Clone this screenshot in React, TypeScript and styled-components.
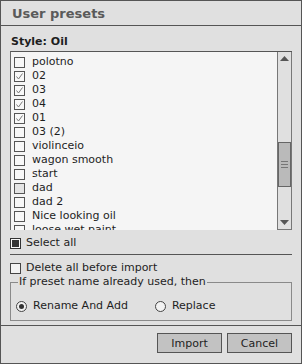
import styled, { createGlobalStyle } from "styled-components";

const GlobalStyle = createGlobalStyle`
  html, body {
    margin: 0;
    padding: 0;
    background: #e0e0e0;
  }
  * {
    box-sizing: border-box;
  }
`;

interface Preset {
  name: string;
  checked: boolean;
  hover?: boolean;
}

const presets: Preset[] = [
  { name: "polotno", checked: false },
  { name: "02", checked: true },
  { name: "03", checked: true },
  { name: "04", checked: true },
  { name: "01", checked: true },
  { name: "03 (2)", checked: false },
  { name: "violinceio", checked: false },
  { name: "wagon smooth", checked: false },
  { name: "start", checked: false },
  { name: "dad", checked: false, hover: true },
  { name: "dad 2", checked: false },
  { name: "Nice looking oil", checked: false },
  { name: "loose wet paint", checked: false },
];

function CheckMark() {
  return (
    <svg width="9" height="9" viewBox="0 0 9 9">
      <polyline points="1.5,4.5 3.5,7 7.5,1.5" fill="none" stroke="#7a7a7a" strokeWidth="1" />
    </svg>
  );
}

function Arrow({ down }: { down?: boolean }) {
  return (
    <svg width="9" height="5" viewBox="0 0 9 5">
      <polygon points={down ? "0,0 9,0 4.5,5" : "0,5 9,5 4.5,0"} fill="#555" />
    </svg>
  );
}

export default function App() {
  return (
    <>
      <GlobalStyle />
      <Dialog>
        <TitleBar>User presets</TitleBar>
        <Body>
          <StyleLabel>Style: Oil</StyleLabel>
          <ListBox>
            <Rows>
              {presets.map((p) => (
                <Row key={p.name}>
                  <Box hover={p.hover}>{p.checked && <CheckMark />}</Box>
                  <span>{p.name}</span>
                </Row>
              ))}
            </Rows>
            <ScrollBar>
              <ArrowCell>
                <Arrow />
              </ArrowCell>
              <Track>
                <Thumb>
                  <Grip />
                  <Grip />
                  <Grip />
                </Thumb>
              </Track>
              <ArrowCell>
                <Arrow down />
              </ArrowCell>
            </ScrollBar>
          </ListBox>
          <OptionRow top={6}>
            <TriBox>
              <TriFill />
            </TriBox>
            <span>Select all</span>
          </OptionRow>
          <Divider />
          <OptionRow top={6}>
            <PlainBox />
            <span>Delete all before import</span>
          </OptionRow>
          <Group>
            <Legend>If preset name already used, then</Legend>
            <RadioLine>
              <RadioItem>
                <Radio>
                  <RadioDot />
                </Radio>
                <span>Rename And Add</span>
              </RadioItem>
              <RadioItem>
                <Radio />
                <span>Replace</span>
              </RadioItem>
            </RadioLine>
          </Group>
        </Body>
        <Footer>
          <Button>Import</Button>
          <Button>Cancel</Button>
        </Footer>
      </Dialog>
    </>
  );
}

const Dialog = styled.div`
  width: 302px;
  height: 364px;
  border: 1px solid #555;
  background: #e0e0e0;
  display: flex;
  flex-direction: column;
  font-family: "DejaVu Sans", sans-serif;
  font-size: 11px;
  color: #1e1e1e;
`;

const TitleBar = styled.div`
  height: 25px;
  flex: none;
  border-bottom: 1px solid #555;
  padding: 5px 0 0 11px;
  font-weight: bold;
  font-size: 13px;
  color: #5a5a5a;
`;

const Body = styled.div`
  flex: 1;
  padding: 9px 9px 0 9px;
  display: flex;
  flex-direction: column;
`;

const StyleLabel = styled.div`
  height: 14px;
  line-height: 14px;
  font-weight: bold;
  margin: 0 0 2px 1px;
`;

const ListBox = styled.div`
  height: 179px;
  flex: none;
  display: flex;
  background: #f5f5f5;
  border-top: 1px solid #555;
  border-left: 1px solid #6a6a6a;
  overflow: hidden;
`;

const Rows = styled.div`
  flex: 1;
  padding: 3px 0 0 3px;
  overflow: hidden;
`;

const Row = styled.div`
  height: 14px;
  display: flex;
  align-items: center;
  gap: 7px;
  line-height: 14px;
  white-space: nowrap;
`;

const Box = styled.div<{ hover?: boolean }>`
  width: 11px;
  height: 11px;
  flex: none;
  border: 1px solid #555;
  background: ${(p) => (p.hover ? "#e4e4e4" : "#f8f8f8")};
  display: flex;
  align-items: center;
  justify-content: center;
`;

const ScrollBar = styled.div`
  width: 15px;
  flex: none;
  display: flex;
  flex-direction: column;
  border: 1px solid #777;
  border-top: none;
  background: #e0e0e0;
`;

const ArrowCell = styled.div`
  height: 13px;
  display: flex;
  align-items: center;
  justify-content: center;
`;

const Track = styled.div`
  flex: 1;
  padding-top: 77px;
`;

const Thumb = styled.div`
  height: 45px;
  background: #bababa;
  border: 1px solid #666;
  display: flex;
  flex-direction: column;
  align-items: center;
  justify-content: center;
  gap: 2px;
`;

const Grip = styled.div`
  width: 7px;
  height: 1px;
  background: #777;
`;

const OptionRow = styled.div<{ top: number }>`
  margin-top: ${(p) => p.top}px;
  height: 14px;
  flex: none;
  display: flex;
  align-items: center;
  gap: 5px;
  line-height: 14px;
`;

const TriBox = styled.div`
  width: 11px;
  height: 11px;
  border: 1px solid #333;
  background: #f8f8f8;
  display: flex;
  align-items: center;
  justify-content: center;
`;

const TriFill = styled.div`
  width: 7px;
  height: 7px;
  background: #333;
`;

const PlainBox = styled.div`
  width: 11px;
  height: 11px;
  border: 1px solid #444;
  background: #f2f2f2;
`;

const Divider = styled.div`
  height: 1px;
  flex: none;
  background: #555;
  margin-top: 4px;
`;

const Group = styled.fieldset`
  margin: 0;
  padding: 10px 0 7px 5px;
  border: 1px solid #8a8a8a;
  min-width: 0;
`;

const Legend = styled.legend`
  padding: 0 1px;
  margin-left: 2px;
  line-height: 14px;
`;

const RadioLine = styled.div`
  display: flex;
  align-items: center;
  gap: 27px;
`;

const RadioItem = styled.div`
  display: flex;
  align-items: center;
  gap: 6px;
  height: 14px;
  line-height: 14px;
`;

const Radio = styled.div`
  width: 11px;
  height: 11px;
  border-radius: 50%;
  border: 1px solid #444;
  background: #f2f2f2;
  display: flex;
  align-items: center;
  justify-content: center;
`;

const RadioDot = styled.div`
  width: 5px;
  height: 5px;
  border-radius: 50%;
  background: #333;
`;

const Footer = styled.div`
  height: 38px;
  flex: none;
  border-top: 1px solid #555;
  display: flex;
  justify-content: flex-end;
  gap: 5px;
  padding: 7px 9px 0 0;
`;

const Button = styled.button`
  width: 65px;
  height: 20px;
  padding: 0;
  background: #c2c2c2;
  border: 1px solid #555;
  font-family: "DejaVu Sans", sans-serif;
  font-size: 11px;
  color: #1e1e1e;
`;
